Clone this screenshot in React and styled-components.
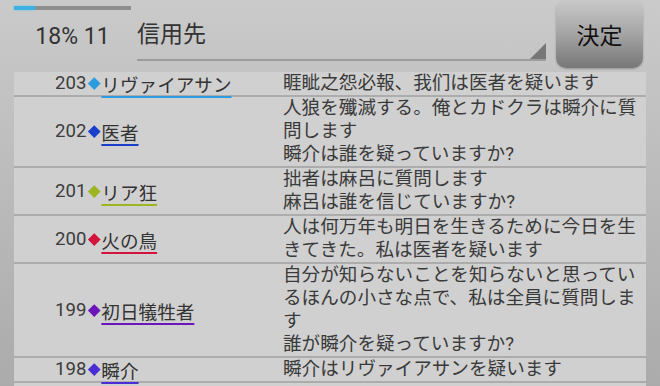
import React from 'react';
import styled, { createGlobalStyle } from "styled-components"

const GlobalStyle = createGlobalStyle`
    html, body {
        margin: 0;
        padding: 0;
        height: 100%;
    }
    body {
        font-family: Roboto, "Noto Sans CJK JP", sans-serif;
        background: linear-gradient(#cacaca, #ababab);
        overflow: hidden;
    }
`

const Screen = styled.div`
    display: flex;
    flex-direction: column;
    height: 386px;
    overflow: hidden;
`

const Header = styled.div`
    display: flex;
    align-items: flex-start;
    height: 72px;
    padding-left: 14px;
`

const Status = styled.div`
    display: flex;
    flex-direction: column;
    align-items: center;
    width: 117px;
    padding-top: 6px;
`

const Progress = styled.div`
    width: 100%;
    height: 4px;
    background: #8e8e8e;
    & span {
        display: block;
        height: 100%;
        background: #3cb1e2;
        box-shadow: 0 0 2px #5cc4f0;
    }
`

const StatusText = styled.div`
    margin-top: 13px;
    font-size: 23px;
    color: #333;
    line-height: 28px;
`

const Field = styled.div`
    position: relative;
    width: 409px;
    height: 61px;
    margin-left: 6px;
    border-bottom: 2px solid #9c9c9c;
    box-sizing: border-box;
    font-family: "Noto Sans CJK JP", sans-serif;
    font-size: 23px;
    line-height: 30px;
    color: #333;
    padding-top: 17px;
    &::after {
        content: "";
        position: absolute;
        right: 0;
        bottom: 0;
        border-style: solid;
        border-width: 0 0 16px 16px;
        border-color: transparent transparent #777 transparent;
    }
`

const Button = styled.button`
    margin-left: 10px;
    width: 87px;
    height: 68px;
    border: none;
    border-radius: 10px;
    background: linear-gradient(#c9c9c9, #a4a4a4 50%, #777);
    box-shadow: 0 1px 2px rgba(0, 0, 0, 0.25);
    font-family: "Noto Sans CJK JP", sans-serif;
    font-size: 23px;
    color: #111;
    padding: 0;
`

const List = styled.div`
    flex: 1;
    margin: 0 14px;
    background: #d0d0d0;
    overflow: hidden;
`

const Row = styled.div`
    display: flex;
    border-bottom: 2px solid #acacac;
`

const Who = styled.div`
    display: flex;
    align-items: center;
    width: 228px;
    padding-left: 41px;
    font-size: 18.6px;
    line-height: 23px;
    color: #3c3c3c;
`

const Diamond = styled.span`
    display: inline-block;
    width: 8.5px;
    height: 8.5px;
    margin: 0 3px 0 3.5px;
    background: ${p => p.color};
    transform: rotate(45deg);
`

const Name = styled.span`
    font-family: "Noto Sans CJK JP", sans-serif;
    color: #333;
    text-decoration: underline;
    text-decoration-color: ${p => p.color};
    text-decoration-thickness: 2px;
    text-underline-offset: 4px;
`

const Message = styled.div`
    width: 363px;
    font-family: Roboto, "Noto Sans CJK JP", sans-serif;
    font-size: 18.6px;
    line-height: 23px;
    color: #3a3a3a;
    white-space: pre-wrap;
    word-break: break-all;
`

const posts = [
    { no: 203, name: "リヴァイアサン", color: "#2d9be0", text: "睚眦之怨必報、我们は医者を疑います" },
    { no: 202, name: "医者", color: "#1b3fcb", text: "人狼を殲滅する。俺とカドクラは瞬介に質問します\n瞬介は誰を疑っていますか?" },
    { no: 201, name: "リア狂", color: "#9cb520", text: "拙者は麻呂に質問します\n麻呂は誰を信じていますか?" },
    { no: 200, name: "火の鳥", color: "#d3143c", text: "人は何万年も明日を生きるために今日を生きてきた。私は医者を疑います" },
    { no: 199, name: "初日犠牲者", color: "#6a16b8", text: "自分が知らないことを知らないと思っているほんの小さな点で、私は全員に質問します\n誰が瞬介を疑っていますか?" },
    { no: 198, name: "瞬介", color: "#4a2dd4", text: "瞬介はリヴァイアサンを疑います" },
]

function App () {
    return (
        <Screen>
            <GlobalStyle />
            <Header>
                <Status>
                    <Progress><span style={{ width: "18%" }} /></Progress>
                    <StatusText>18% 11</StatusText>
                </Status>
                <Field>信用先</Field>
                <Button>決定</Button>
            </Header>
            <List>
                {posts.map(p => (
                    <Row key={p.no}>
                        <Who>
                            {p.no}
                            <Diamond color={p.color} />
                            <Name color={p.color}>{p.name}</Name>
                        </Who>
                        <Message>{p.text}</Message>
                    </Row>
                ))}
            </List>
        </Screen>
    )
}

export default App
